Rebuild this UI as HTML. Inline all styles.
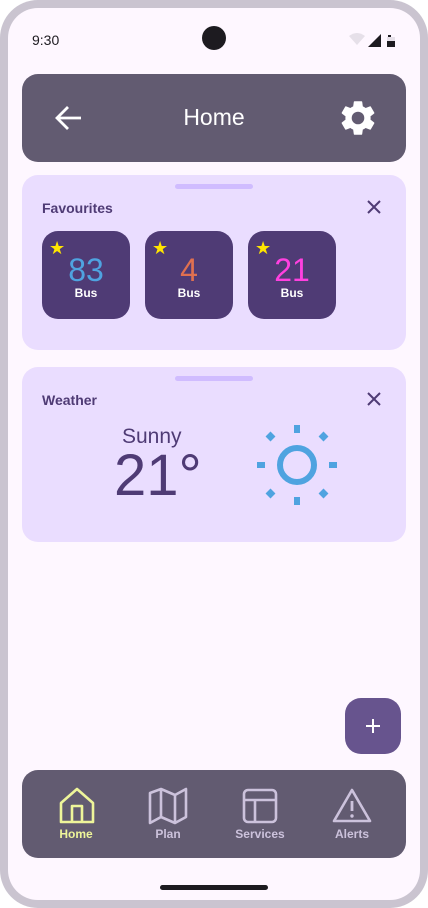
<!DOCTYPE html>
<html><head><meta charset="utf-8"><style>
*{margin:0;padding:0;box-sizing:border-box}
body{width:428px;height:908px;background:#fff;font-family:"Liberation Sans",sans-serif;overflow:hidden;position:relative}
.frame{position:absolute;left:0;top:0;width:428px;height:908px;background:#cac4d0;border-radius:38px}
.screen{position:absolute;left:8px;top:8px;width:412px;height:892px;background:#fef7ff;border-radius:30px;overflow:hidden}
.abs{position:absolute}
.card{position:absolute;left:22px;width:384px;height:175px;background:#eaddff;border-radius:16px}
.handle{position:absolute;left:153px;top:9px;width:78px;height:5px;border-radius:3px;background:#d0bcff}
.ctitle{position:absolute;left:20px;font-size:14px;font-weight:bold;color:#4f3b75}
.tile{position:absolute;top:231px;width:88px;height:88px;background:#4f3b75;border-radius:16px;color:#fff;text-align:center}
.tile .n{position:absolute;left:0;right:0;top:21px;font-size:32px;line-height:36px}
.tile .b{position:absolute;left:0;right:0;top:55px;font-size:12px;font-weight:bold}
.tile .s{position:absolute;left:7px;top:8px;color:#ffe500;font-size:18px;line-height:18px}
.nav{position:absolute;left:22px;top:770px;width:384px;height:88px;background:#625b71;border-radius:16px}
.ni{position:absolute;top:57px;font-size:12px;font-weight:bold;color:#ccc2dc;text-align:center;width:80px}
</style></head><body>
<div class="frame"></div>
<div class="screen"></div>
<div class="abs" style="left:32px;top:32px;font-size:14px;color:#1d1b20">9:30</div>
<div class="abs" style="left:202px;top:26px;width:24px;height:24px;border-radius:50%;background:#1d1b20"></div>
<svg class="abs" style="left:348px;top:33px" width="50" height="16" viewBox="0 0 50 16">
<path d="M1 3 Q9 -3 17 3 L9 12 Z" fill="#e6e0e9"/>
<path d="M20 14 L33 1 L33 14 Z" fill="#1d1b20"/>
<rect x="40" y="2" width="3" height="2" fill="#1d1b20"/><rect x="39" y="4" width="8" height="10" fill="#e6e0e9"/><rect x="39" y="8" width="8" height="6" fill="#1d1b20"/>
</svg>
<div class="abs" style="left:22px;top:74px;width:384px;height:88px;background:#625b71;border-radius:16px"></div>
<svg class="abs" style="left:53px;top:104px" width="30" height="28" viewBox="0 0 30 28"><path d="M28 14 H4 M15 3 L4 14 L15 25" stroke="#fff" stroke-width="2.8" fill="none"/></svg>
<div class="abs" style="left:0;width:428px;top:104px;text-align:center;color:#fff;font-size:23px">Home</div>
<svg class="abs" style="left:337px;top:97px" width="42" height="42" viewBox="0 0 24 24"><path fill="#fff" d="M19.14 12.94c.04-.3.06-.61.06-.94 0-.32-.02-.64-.07-.94l2.03-1.58a.49.49 0 0 0 .12-.61l-1.92-3.32a.49.49 0 0 0-.59-.22l-2.39.96c-.5-.38-1.030-.7-1.62-.94l-.36-2.54a.48.48 0 0 0-.48-.41h-3.84c-.24 0-.43.17-.47.41l-.36 2.540c-.59.24-1.13.57-1.62.94l-2.39-.96a.49.49 0 0 0-.59.22L2.74 8.87c-.12.21-.08.47.12.61l2.03 1.58c-.05.3-.09.63-.09.94s.02.64.07.94l-2.03 1.58a.49.49 0 0 0-.12.61l1.92 3.32c.12.22.37.29.59.22l2.39-.96c.5.38 1.03.7 1.62.94l.36 2.54c.05.24.24.41.48.41h3.84c.24 0 .44-.17.47-.41l.36-2.54c.59-.24 1.13-.56 1.62-.94l2.39.96c.22.08.47 0 .59-.22l1.920-3.32c.12-.22.07-.47-.12-.61l-2.01-1.58zM12 15.6A3.6 3.6 0 1 1 12 8.4a3.6 3.6 0 0 1 0 7.2z"/></svg>

<div class="card" style="top:175px"><div class="handle"></div><div class="ctitle" style="top:25px">Favourites</div>
<svg class="abs" style="left:344px;top:24px" width="16" height="16" viewBox="0 0 16 16"><path d="M2 2L14 14M14 2L2 14" stroke="#4f3b75" stroke-width="2"/></svg></div>
<div class="tile" style="left:42px"><div class="s">★</div><div class="n" style="color:#4fa3e0">83</div><div class="b">Bus</div></div>
<div class="tile" style="left:145px"><div class="s">★</div><div class="n" style="color:#e07050">4</div><div class="b">Bus</div></div>
<div class="tile" style="left:248px"><div class="s">★</div><div class="n" style="color:#ff40e0">21</div><div class="b">Bus</div></div>

<div class="card" style="top:367px"><div class="handle"></div><div class="ctitle" style="top:25px">Weather</div>
<svg class="abs" style="left:344px;top:24px" width="16" height="16" viewBox="0 0 16 16"><path d="M2 2L14 14M14 2L2 14" stroke="#4f3b75" stroke-width="2"/></svg>
<div class="abs" style="left:100px;top:58px;font-size:21px;color:#4f3b75">Sunny</div>
<div class="abs" style="left:92px;top:76px;font-size:58px;line-height:66px;color:#4f3b75">21°</div>
</div>
<svg class="abs" style="left:255px;top:423px" width="84" height="84" viewBox="0 0 84 84">
<circle cx="42" cy="42" r="17" stroke="#4fa3e0" stroke-width="6" fill="none"/>
<g fill="#4fa3e0"><rect x="39" y="2" width="6" height="8"/><rect x="39" y="74" width="6" height="8"/><rect x="2" y="39" width="8" height="6"/><rect x="74" y="39" width="8" height="6"/>
<rect x="12" y="10" width="7" height="7" transform="rotate(45 15.5 13.5)"/><rect x="65" y="10" width="7" height="7" transform="rotate(45 68.5 13.5)"/>
<rect x="12" y="67" width="7" height="7" transform="rotate(45 15.5 70.5)"/><rect x="65" y="67" width="7" height="7" transform="rotate(45 68.5 70.5)"/></g></svg>

<div class="abs" style="left:345px;top:698px;width:56px;height:56px;background:#67548e;border-radius:16px"></div>
<svg class="abs" style="left:365px;top:718px" width="16" height="16" viewBox="0 0 16 16"><path d="M8 1V15M1 8H15" stroke="#fff" stroke-width="2"/></svg>

<div class="nav">
<svg class="abs" style="left:36px;top:17px" width="38" height="38" viewBox="0 0 38 38"><path d="M3 16 L19 2 L35 16 V35 H3 Z M14 35 V19 H24 V35" stroke="#eef59a" stroke-width="2.6" fill="none" stroke-linejoin="round"/></svg>
<div class="ni" style="left:14px;color:#eef59a">Home</div>
<svg class="abs" style="left:126px;top:17px" width="40" height="38" viewBox="0 0 40 38"><path d="M2 6 L13 2 L27 8 L38 2 V30 L27 36 L13 30 L2 36 Z M13 2 V30 M27 8 V36" stroke="#ccc2dc" stroke-width="2.6" fill="none" stroke-linejoin="round"/></svg>
<div class="ni" style="left:106px">Plan</div>
<svg class="abs" style="left:220px;top:18px" width="36" height="36" viewBox="0 0 36 36"><rect x="2" y="2" width="32" height="32" rx="4" stroke="#ccc2dc" stroke-width="2.6" fill="none"/><path d="M2 12 H34 M13 12 V34" stroke="#ccc2dc" stroke-width="2.6"/></svg>
<div class="ni" style="left:198px">Services</div>
<svg class="abs" style="left:310px;top:18px" width="40" height="36" viewBox="0 0 40 36"><path d="M20 2 L38 33 H2 Z" stroke="#ccc2dc" stroke-width="2.6" fill="none" stroke-linejoin="round"/><path d="M20 13 V23" stroke="#ccc2dc" stroke-width="2.8"/><circle cx="20" cy="28" r="1.7" fill="#ccc2dc"/></svg>
<div class="ni" style="left:290px">Alerts</div>
</div>
<div class="abs" style="left:160px;top:885px;width:108px;height:5px;border-radius:3px;background:#1d1b20"></div>
</body></html>
